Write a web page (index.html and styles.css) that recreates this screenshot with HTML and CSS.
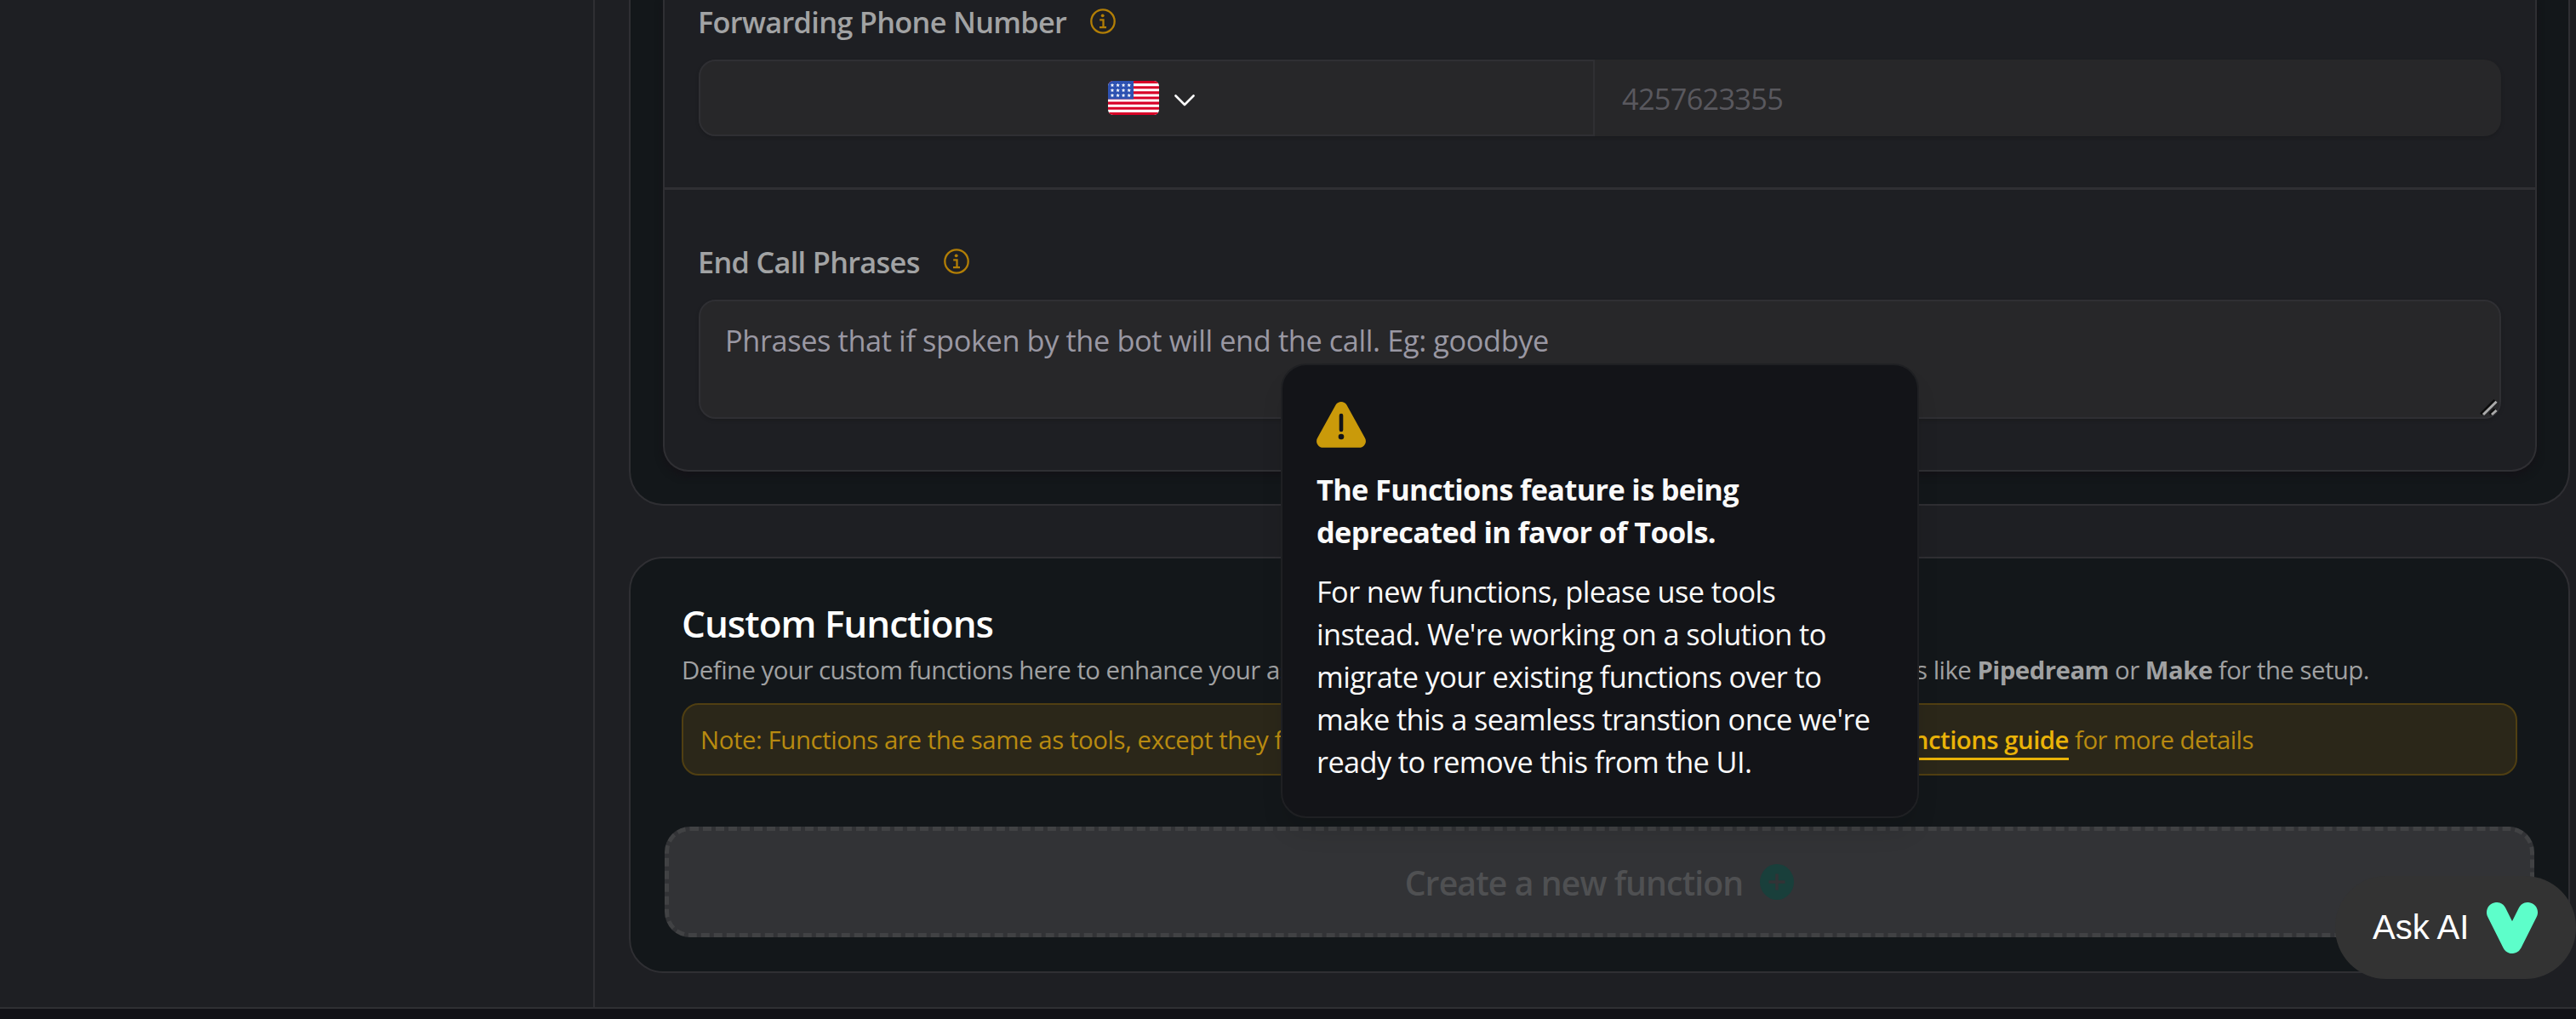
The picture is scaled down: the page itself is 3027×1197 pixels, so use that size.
FILE: index.html
```html
<!DOCTYPE html>
<html lang="en">
<head>
    <meta charset="UTF-8">
    <title>Assistant - Functions</title>
    <link rel="stylesheet" href="styles.css">
</head>
<body>

<div class="app">
    <div class="sidebar"></div>

    <div class="main">
        <div class="card card-first">
            <div class="panel">
                <div class="field">
                    <div class="label-row">
                        <label for="phone">Forwarding Phone Number</label>
                        <svg class="info" viewBox="0 0 30 30">
                            <circle cx="15" cy="15" r="13.7"/>
                            <path d="M11.2 13.4h4.3v8.7M11 22.1h8"/>
                            <circle class="dot" cx="14.7" cy="8.3" r="1.9"/>
                        </svg>
                    </div>
                    <div class="phone">
                        <div class="country">
                            <svg class="flag" viewBox="0 0 60 40">
                                <defs>
                                    <clipPath id="flag-clip"><rect width="60" height="40" rx="6"/></clipPath>
                                    <path id="star" d="M0-2.3 .7-.7 2.3-.6 1 .5 1.4 2.1 0 1.2-1.4 2.1-1 .5-2.3-.6-.7-.7z"/>
                                </defs>
                                <g clip-path="url(#flag-clip)">
                                    <rect width="60" height="40" fill="#fff"/>
                                    <path fill="#d80027" d="M0 0h60v3.1H0zM0 6.15h60v3.1H0zM0 12.3h60v3.1H0zM0 18.45h60v3.1H0zM0 24.6h60v3.1H0zM0 30.75h60v3.1H0zM0 36.9h60V40H0z"/>
                                    <rect width="30" height="21.5" fill="#2e52b2"/>
                                    <g fill="#fff">
                                        <use href="#star" x="5" y="5"/><use href="#star" x="11.6" y="5"/><use href="#star" x="18.1" y="5"/><use href="#star" x="24.7" y="5"/>
                                        <use href="#star" x="5" y="11"/><use href="#star" x="11.6" y="11"/><use href="#star" x="18.1" y="11"/><use href="#star" x="24.7" y="11"/>
                                        <use href="#star" x="5" y="17"/><use href="#star" x="11.6" y="17"/><use href="#star" x="18.1" y="17"/><use href="#star" x="24.7" y="17"/>
                                    </g>
                                </g>
                            </svg>
                            <svg class="chevron" viewBox="0 0 24 14"><path d="M1.5 1.5 12 12 22.5 1.5"/></svg>
                        </div>
                        <input type="text" id="phone" placeholder="4257623355">
                    </div>
                </div>

                <div class="divider"></div>

                <div class="field">
                    <div class="label-row">
                        <label for="phrases">End Call Phrases</label>
                        <svg class="info" viewBox="0 0 30 30">
                            <circle cx="15" cy="15" r="13.7"/>
                            <path d="M11.2 13.4h4.3v8.7M11 22.1h8"/>
                            <circle class="dot" cx="14.7" cy="8.3" r="1.9"/>
                        </svg>
                    </div>
                    <div class="phrases">
                        <textarea id="phrases" placeholder="Phrases that if spoken by the bot will end the call. Eg: goodbye"></textarea>
                        <svg class="grip" viewBox="0 0 22 20">
                            <path class="grip-dark" d="M1 17.5 17.5 1M11.500 17.500 17.500 11.500"/>
                            <path class="grip-light" d="M4 18 19.5 2.800M14 18 19.500 13"/>
                        </svg>
                    </div>
                </div>
            </div>
        </div>

        <div class="card functions">
            <div class="functions-head">
                <h2>Custom Functions</h2>
                <p class="sub">
                    <span>Define your custom functions here to enhance your assistant.</span>
                    <span>Use tools like <b>Pipedream</b> or <b>Make</b> for the setup.</span>
                </p>
                <p class="note">
                    <span>Note: Functions are the same as tools, except they follow</span>
                    <span>See the <a href="#">functions guide</a> for more details</span>
                </p>
            </div>

            <button class="create" disabled>
                Create a new function
                <svg class="plus" viewBox="0 0 40 42">
                    <ellipse cx="20" cy="21" rx="20" ry="21"/>
                    <path d="M10.5 21h19M20 11.5v19"/>
                </svg>
            </button>

            <div class="tooltip">
                <svg class="warning" viewBox="0 0 60 60">
                    <path class="tri" d="M23.5 6.700c2.900-5 10.100-5 13 0l21.400 38.700c2.900 5-.700 11.300-6.500 11.300H8.600c-5.800 0-9.400-6.300-6.500-11.300z"/>
                    <path class="mark" d="M30 19v17"/>
                    <circle cx="30" cy="44" r="3.300"/>
                </svg>
                <p class="tooltip-title">The Functions feature is being<br>deprecated in favor of Tools.</p>
                <p>For new functions, please use tools<br>instead. We're working on a solution to<br>migrate your existing functions over to<br>make this a seamless transtion once we're<br>ready to remove this from the UI.</p>
            </div>
        </div>
    </div>
</div>

<button class="ask">
    Ask AI
    <svg viewBox="0 0 60 60"><path d="M11.7 11.7 30 48.3 48.3 11.7"/></svg>
</button>

</body>
</html>
```

FILE: styles.css
```css
* {
    box-sizing: border-box;
}
body {
    margin: 0;
    height: 1197px;
    overflow: hidden;
    background: #121217;
    color: #fafafa;
    font-family: "Open Sans", "Noto Sans", sans-serif;
    font-size: 34.3px;
    line-height: 50px;
}
h2, p {
    margin: 0;
}
svg {
    display: block;
    flex: none;
}
.app {
    display: flex;
    height: 1185px;
    background: #1e1f23;
    border-bottom: 2px solid #2f2f33;
}
.sidebar {
    flex: none;
    width: 699px;
    border-right: 2px solid #2f2f33;
}
.main {
    flex: 1;
    padding: 0 7px 40px 40px;
}

/* cards */
.card {
    position: relative;
    background: #13171a;
    border: 2px solid #2f2f33;
    border-radius: 40px;
}
.card-first {
    padding: 0 37px 38px 38px;
    border-top: none;
    border-radius: 0 0 40px 40px;
}
.panel {
    background: #1e1f23;
    border: 2px solid #2f2f33;
    border-top: none;
    border-radius: 0 0 30px 30px;
    padding-bottom: 60px;
    box-shadow: 0 5px 8px rgba(20, 16, 22, 0.7);
}
.field {
    padding: 0 40px;
}
.divider {
    height: 3px;
    margin: 60px 0 59px;
    background: #2f2f33;
}
.label-row {
    display: flex;
    align-items: center;
    height: 50px;
    margin-bottom: 20px;
}
label {
    margin-left: -1px;
    padding-top: 2px;
    font-weight: 600;
    letter-spacing: -0.68px;
    color: #a2a3a4;
}
.info {
    width: 30px;
    height: 30px;
    margin-left: 28px;
    fill: none;
    stroke: #b27e06;
    stroke-width: 2.3;
}
.info .dot {
    fill: #b27e06;
    stroke: none;
}

/* inputs */
.phone {
    display: flex;
    height: 90px;
    background: #272729;
    border-radius: 20px;
    box-shadow: 0 2px 4px rgba(0, 0, 0, 0.15);
}
.country {
    display: flex;
    align-items: center;
    justify-content: center;
    gap: 18px;
    width: 1053px;
    padding-left: 10px;
    border: 2px solid #2f2f33;
    border-radius: 20px 0 0 20px;
}
.flag {
    width: 60px;
    height: 40px;
}
.chevron {
    width: 24px;
    height: 14px;
    margin-top: 5px;
    fill: none;
    stroke: #fff;
    stroke-width: 2.6;
    stroke-linecap: round;
    stroke-linejoin: round;
}
.phone input {
    flex: 1;
    padding: 2px 32px 0;
    background: none;
    border: none;
    font: inherit;
    letter-spacing: -0.7px;
}
.phone input::placeholder {
    color: #59585e;
}
.phrases {
    position: relative;
    height: 140px;
}
.phrases textarea {
    display: block;
    width: 100%;
    height: 140px;
    padding: 21px 29px;
    background: #272729;
    border: 2px solid #2f2f33;
    border-radius: 20px;
    box-shadow: 0 2px 4px rgba(0, 0, 0, 0.15);
    font: inherit;
    letter-spacing: -0.38px;
    resize: none;
}
.phrases textarea::placeholder {
    color: #9a98a3;
}
.grip {
    position: absolute;
    right: 3px;
    bottom: 3px;
    width: 22px;
    height: 20px;
    fill: none;
    stroke-width: 3;
}
.grip-dark {
    stroke: #0c0c0c;
}
.grip-light {
    stroke: #aaa;
}

/* custom functions */
.functions {
    margin-top: 60px;
    padding: 46px 40px 40px;
}
.functions-head {
    margin: 0 20px 60px;
}
h2 {
    font-size: 44px;
    font-weight: 600;
    line-height: 60px;
    letter-spacing: -1px;
    color: #fff;
}
.sub, .note {
    display: flex;
    justify-content: space-between;
    font-size: 29.4px;
    white-space: nowrap;
}
.sub {
    width: 1983px;
    margin-bottom: 14px;
    letter-spacing: -0.53px;
    color: #a0a1a2;
}
.note {
    height: 85px;
    padding: 16px 308px 15px 20px;
    background: #2b2719;
    border: 2px solid #503f12;
    border-radius: 20px;
    letter-spacing: -0.42px;
    color: #b88a10;
}
.note span + span {
    letter-spacing: -0.53px;
}
.note a {
    padding-bottom: 1px;
    border-bottom: 3px solid #eab308;
    color: #eab308;
    font-weight: 600;
    text-decoration: none;
}
.create {
    display: flex;
    align-items: center;
    justify-content: center;
    gap: 20px;
    width: 2197px;
    height: 130px;
    padding: 0;
    background: #323336;
    border: 5px dashed #414244;
    border-radius: 30px;
    font: 600 39.2px "Open Sans", "Noto Sans", sans-serif;
    letter-spacing: -0.9px;
    color: #4f5052;
}
.plus {
    width: 40px;
    height: 42px;
    fill: #193f3b;
    stroke: none;
}
.plus path {
    stroke: #323336;
    stroke-width: 3.5;
}

.tooltip {
    position: absolute;
    left: 764px;
    top: -229px;
    width: 750px;
    height: 534px;
    padding: 40px;
    background: #131418;
    border: 2px solid #1f2023;
    border-radius: 30px;
    box-shadow: 0 20px 30px -6px rgba(0, 0, 0, 0.12);
    letter-spacing: -0.6px;
    white-space: nowrap;
}
.warning {
    width: 60px;
    height: 60px;
    margin: 0 0 21px -1px;
    fill: #131418;
}
.warning .tri {
    fill: #ca9a0a;
}
.warning .mark {
    stroke: #131418;
    stroke-width: 4.6;
    stroke-linecap: round;
}
.tooltip-title {
    margin-bottom: 20px;
    font-weight: 700;
    letter-spacing: -0.65px;
}

/* chat launcher */
.ask {
    position: fixed;
    right: 0;
    top: 1029px;
    display: flex;
    align-items: center;
    justify-content: space-between;
    width: 283px;
    height: 121px;
    padding: 0 45px 0 44px;
    background: #333;
    border: none;
    border-radius: 60px;
    font: 40px "Liberation Sans", Arial, sans-serif;
    color: #fff;
}
.ask svg {
    width: 60px;
    height: 60px;
    fill: none;
    stroke: #5dfeca;
    stroke-width: 23.4;
    stroke-linecap: round;
    stroke-linejoin: round;
}
```
